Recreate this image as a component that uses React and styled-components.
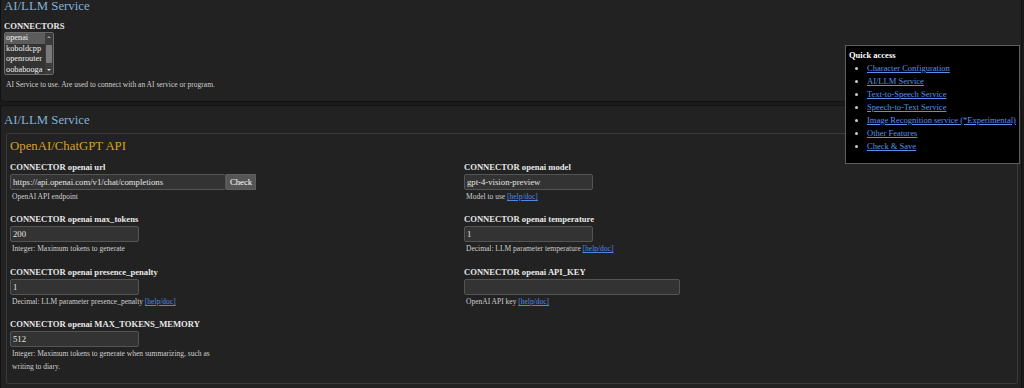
import styled, { createGlobalStyle } from "styled-components";

const GlobalStyle = createGlobalStyle`
  html, body {
    margin: 0;
    background: #1a1a1a;
    overflow: hidden;
  }
  body {
    font-family: "Liberation Serif", "Times New Roman", serif;
    color: #ddd;
  }
`;

const connectors = ["openai", "koboldcpp", "openrouter", "oobabooga"];

const fields = [
  {
    label: "CONNECTOR openai url",
    value: "https://api.openai.com/v1/chat/completions",
    wide: true,
    check: true,
    help: "OpenAI API endpoint",
  },
  {
    label: "CONNECTOR openai model",
    value: "gpt-4-vision-preview",
    help: "Model to use",
    doc: true,
  },
  {
    label: "CONNECTOR openai max_tokens",
    value: "200",
    help: "Integer: Maximum tokens to generate",
  },
  {
    label: "CONNECTOR openai temperature",
    value: "1",
    help: "Decimal: LLM parameter temperature",
    doc: true,
  },
  {
    label: "CONNECTOR openai presence_penalty",
    value: "1",
    help: "Decimal: LLM parameter presence_penalty",
    doc: true,
  },
  {
    label: "CONNECTOR openai API_KEY",
    value: "",
    wide: true,
    help: "OpenAI API key",
    doc: true,
  },
  {
    label: "CONNECTOR openai MAX_TOKENS_MEMORY",
    value: "512",
    help: "Integer: Maximum tokens to generate when summarizing, such as writing to diary.",
  },
];

const quickLinks = [
  "Character Configuration",
  "AI/LLM Service",
  "Text-to-Speech Service",
  "Speech-to-Text Service",
  "Image Recognition service (*Experimental)",
  "Other Features",
  "Check & Save",
];

const Field = ({ label, value, wide, check, help, doc }) => (
  <FieldBox>
    <Label>{label}</Label>
    <InputRow>
      <Input $wide={wide} value={value} readOnly />
      {check && <CheckButton>Check</CheckButton>}
    </InputRow>
    <Help>
      {help}
      {doc && (
        <>
          {" "}
          <DocLink href="#">[help/doc]</DocLink>
        </>
      )}
    </Help>
  </FieldBox>
);

const App = () => (
  <>
    <GlobalStyle />
    <Page>
      <Section>
        <SectionTitle>AI/LLM Service</SectionTitle>
        <Label $top>CONNECTORS</Label>
        <ListBox>
          <Options>
            {connectors.map((c, i) => (
              <Option key={c} $selected={i === 0}>
                {c}
              </Option>
            ))}
          </Options>
          <ScrollBar>
            <Arrow $up />
            <Thumb />
            <Arrow />
          </ScrollBar>
        </ListBox>
        <Help $spaced>
          AI Service to use. Are used to connect with an AI service or program.
        </Help>
      </Section>

      <Section>
        <SectionTitle $gap>AI/LLM Service</SectionTitle>
        <Group>
          <GroupTitle>OpenAI/ChatGPT API</GroupTitle>
          <FieldGrid>
            {fields.map((f) => (
              <Field key={f.label} {...f} />
            ))}
          </FieldGrid>
        </Group>
      </Section>
    </Page>

    <QuickAccess>
      <QuickTitle>Quick access</QuickTitle>
      <QuickList>
        {quickLinks.map((l) => (
          <li key={l}>
            <QuickLink href="#">{l}</QuickLink>
          </li>
        ))}
      </QuickList>
    </QuickAccess>
  </>
);

export default App;

const Page = styled.main`
  display: flex;
  flex-direction: column;
  gap: 3px;
  margin-top: -9px;
  width: 1022px;
`;

const Section = styled.section`
  background: #222;
  border: 1px solid #121212;
  border-radius: 3px;
  padding: 6px 3px 10px;
`;

const SectionTitle = styled.h2`
  margin: 0 0 ${(p) => (p.$gap ? "5px" : "6.5px")};
  font-size: 12.8px;
  line-height: 16px;
  font-weight: normal;
  color: #80b1d9;
`;

const Label = styled.div`
  font-size: 8.6px;
  line-height: 11px;
  font-weight: bold;
  color: #e8e8e8;
  margin-bottom: ${(p) => (p.$top ? "0.5px" : "1px")};
`;

const ListBox = styled.div`
  display: flex;
  width: 50px;
  height: 43px;
  box-sizing: border-box;
  border: 1px solid #6a6a6a;
  border-radius: 2px;
  background: #333;
  overflow: hidden;
`;

const Options = styled.div`
  flex: 1;
  display: flex;
  flex-direction: column;
`;

const Option = styled.div`
  font-size: 8.3px;
  line-height: 10.5px;
  padding: 0 1px;
  color: #eee;
  white-space: nowrap;
  background: ${(p) => (p.$selected ? "#5c5c5c" : "transparent")};
`;

const ScrollBar = styled.div`
  width: 8px;
  display: flex;
  flex-direction: column;
  align-items: center;
  background: #3c3c3c;
`;

const Arrow = styled.div`
  width: 0;
  height: 0;
  margin: ${(p) => (p.$up ? "3px 0 auto" : "auto 0 3px")};
  border-left: 2px solid transparent;
  border-right: 2px solid transparent;
  ${(p) =>
    p.$up ? "border-bottom: 2px solid #999;" : "border-top: 2px solid #ddd;"}
`;

const Thumb = styled.div`
  width: 6px;
  height: 18px;
  border-radius: 1px;
  background: #7a7a7a;
`;

const Help = styled.div`
  font-size: 7.5px;
  line-height: 12.5px;
  color: #cfcfcf;
  padding-left: 2px;
  max-width: 215px;
  margin-top: ${(p) => (p.$spaced ? "3.75px" : "1px")};
`;

const DocLink = styled.a`
  color: #4f88e0;
`;

const Group = styled.div`
  margin-left: 2px;
  border: 1px solid #3a3a3a;
  border-radius: 2px;
  padding: 4px 3px 10px;
`;

const GroupTitle = styled.h3`
  margin: 0 0 7.5px;
  font-size: 12.8px;
  line-height: 16px;
  font-weight: normal;
  color: #d6a02c;
`;

const FieldGrid = styled.div`
  display: grid;
  grid-template-columns: 454px 1fr;
  row-gap: 11px;
`;

const FieldBox = styled.div`
  display: flex;
  flex-direction: column;
  align-items: flex-start;
`;

const InputRow = styled.div`
  display: flex;
`;

const Input = styled.input`
  box-sizing: border-box;
  width: ${(p) => (p.$wide ? "216px" : "129px")};
  height: 16px;
  margin: 0;
  padding: 0 2px;
  border: 1px solid #545454;
  border-radius: 2px;
  background: #333;
  color: #e4e4e4;
  font-family: "Liberation Serif", "Times New Roman", serif;
  font-size: 8.7px;
  outline: none;
`;

const CheckButton = styled.button`
  box-sizing: border-box;
  width: 30px;
  height: 16px;
  margin: 0;
  padding: 0;
  border: 1px solid #5e5e5e;
  background: #555;
  color: #fff;
  font-family: "Liberation Serif", "Times New Roman", serif;
  font-size: 8.7px;
  font-weight: normal;
`;

const QuickAccess = styled.nav`
  position: fixed;
  top: 45px;
  left: 845px;
  width: 175px;
  box-sizing: border-box;
  padding: 3px 3px 10px;
  background: #000;
  border: 1px solid #5e5e5e;
`;

const QuickTitle = styled.div`
  font-size: 8.5px;
  line-height: 13px;
  font-weight: bold;
  color: #fff;
`;

const QuickList = styled.ul`
  margin: 0;
  padding-left: 18px;
  font-size: 8.5px;
  line-height: 13px;
  color: #ccc;
  white-space: nowrap;
`;

const QuickLink = styled.a`
  color: #5b91ea;
`;
